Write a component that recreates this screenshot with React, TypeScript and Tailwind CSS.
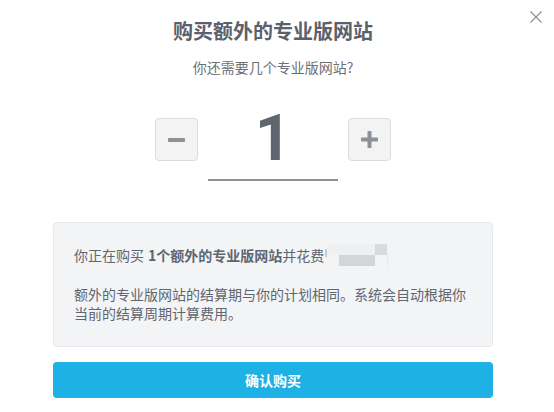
import React from "react";

export default function App() {
  const font = { fontFamily: '"Noto Sans CJK SC", "Noto Sans", sans-serif' };
  return (
    <div className="relative w-[554px] h-[412px] bg-white overflow-hidden" style={font}>
      <button className="absolute right-[12px] top-[11px] w-[12px] h-[12px] text-[#8b9099]">
        <svg viewBox="0 0 12 12" width="12" height="12" fill="none" stroke="currentColor" strokeWidth="1.2">
          <path d="M0.5 0.5 L11.5 11.5 M11.5 0.5 L0.5 11.5" />
        </svg>
      </button>
      <div className="flex flex-col items-center pl-[53px] pr-[61px]">
        <h1 className="mt-[16px] text-[20px] leading-[30px] font-bold text-[#5b616b]">购买额外的专业版网站</h1>
        <p className="mt-[11px] text-[14px] leading-[20px] text-[#6b7079]">你还需要几个专业版网站?</p>
        <div className="mt-[41px] flex items-start gap-[10px]">
          <button className="w-[43px] h-[43px] rounded-[4px] bg-[#f3f3f3] border border-[#dcdcdc] flex items-center justify-center">
            <span className="block w-[17px] h-[4px] rounded-[1px] bg-[#8b9099]" />
          </button>
          <div className="mt-[-11px] w-[130px] flex flex-col items-center">
            <div className="h-[64px] flex items-center justify-center text-[64px] leading-none font-bold text-[#5f6670]" style={{ fontFamily: 'Roboto, "Noto Sans", sans-serif' }}>1</div>
            <div className="mt-[8px] w-[130px] h-[2px] bg-[#8b9099]" />
          </div>
          <button className="w-[43px] h-[43px] rounded-[4px] bg-[#f3f3f3] border border-[#dcdcdc] flex items-center justify-center">
            <svg viewBox="0 0 17 17" width="17" height="17">
              <rect x="0" y="6.5" width="17" height="4" rx="1" fill="#8b9099" />
              <rect x="6.5" y="0" width="4" height="17" rx="1" fill="#8b9099" />
            </svg>
          </button>
        </div>
        <div className="mt-[41px] w-full h-[125px] rounded-[4px] bg-[#f3f4f6] border border-[#e6e8eb] pl-[20px] pr-[18px] pt-[20px] text-[14px] text-[#5f6670]">
          <div className="flex items-center h-[24px]">
            <span>你正在购买 </span>
            <span className="font-bold ml-[4px]">1个额外的专业版网站</span>
            <span>并花费</span>
            <span className="relative ml-[1px] w-[64px] h-[24px]">
              <span className="absolute left-[0px] top-[6px] w-[2px] h-[8px] bg-[#c9ccd0]" />
              <span className="absolute left-[2px] top-[1px] w-[48px] h-[11px] bg-[#eef0f2]" />
              <span className="absolute left-[14px] top-[12px] w-[36px] h-[11px] bg-[#d3d5d8]" />
              <span className="absolute left-[50px] top-[1px] w-[12px] h-[11px] bg-[#d8dadd]" />
              <span className="absolute left-[62px] top-[12px] w-[1px] h-[11px] bg-[#e6e8ea]" />
            </span>
          </div>
          <p className="mt-[18px] leading-[19px]">额外的专业版网站的结算期与你的计划相同。系统会自动根据你当前的结算周期计算费用。</p>
        </div>
        <button className="mt-[15px] w-full h-[36px] rounded-[4px] bg-[#1db1e6] text-white text-[14px] font-bold">确认购买</button>
      </div>
    </div>
  );
}
